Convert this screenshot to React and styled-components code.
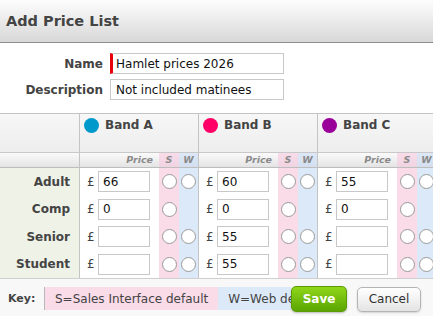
import styled, { createGlobalStyle } from 'styled-components'

const GlobalStyle = createGlobalStyle`
  html, body {
    margin: 0;
    padding: 0;
    background: #fff;
    overflow: hidden;
  }
  body {
    font-family: 'DejaVu Sans', Verdana, sans-serif;
    color: #333;
  }
`

const bands = [
  { name: 'Band A', color: '#0099cc', prices: ['66', '0', '', ''] },
  { name: 'Band B', color: '#ff0066', prices: ['60', '0', '55', '55'] },
  { name: 'Band C', color: '#990099', prices: ['55', '0', '', ''] },
]

const tickets = [
  { name: 'Adult', web: true },
  { name: 'Comp', web: false },
  { name: 'Senior', web: true },
  { name: 'Student', web: true },
]

const App = () => {
  return (
    <Dialog>
      <GlobalStyle />
      <TitleBar>Add Price List</TitleBar>

      <Form>
        <Label>Name</Label>
        <TextInput required defaultValue='Hamlet prices 2026' />
        <Label>Description</Label>
        <TextInput defaultValue='Not included matinees' />
      </Form>

      <Grid>
        <Corner />
        {bands.map((b) => (
          <BandHead key={b.name}>
            <Dot color={b.color} />
            {b.name}
          </BandHead>
        ))}

        <SubCorner />
        {bands.map((b) => (
          <SubHead key={b.name}>
            <PriceHead>Price</PriceHead>
            <Flag kind='s'>S</Flag>
            <Flag kind='w'>W</Flag>
          </SubHead>
        ))}

        {tickets.map((t, i) => (
          <Row key={t.name}>
            <RowLabel>{t.name}</RowLabel>
            {bands.map((b) => (
              <Cell key={b.name}>
                <Pound>£</Pound>
                <PriceInput defaultValue={b.prices[i]} />
                <Gap />
                <Flag kind='s'>
                  <Radio />
                </Flag>
                <Flag kind='w'>{t.web && <Radio />}</Flag>
              </Cell>
            ))}
          </Row>
        ))}
      </Grid>

      <Footer>
        <KeyArea>
          <KeyLabel>Key:</KeyLabel>
          <KeyBox kind='s'>S=Sales Interface default</KeyBox>
          <KeyBox kind='w'>W=Web default</KeyBox>
        </KeyArea>
        <SaveButton>Save</SaveButton>
        <CancelButton>Cancel</CancelButton>
      </Footer>
    </Dialog>
  )
}

const Dialog = styled.div`
  width: 433px;
  height: 316px;
  overflow: hidden;
  display: flex;
  flex-direction: column;
`

const TitleBar = styled.div`
  height: 42px;
  display: flex;
  align-items: center;
  padding-left: 6px;
  font-size: 14.5px;
  font-weight: bold;
  color: #444;
  background: linear-gradient(#fdfdfd, #d8d8d8);
  border-bottom: 1px solid #8c8c8c;
`

const Form = styled.div`
  display: grid;
  grid-template-columns: 103px 174px;
  grid-auto-rows: 21px;
  column-gap: 7px;
  row-gap: 5px;
  padding: 10px 0 13px;
`

const Label = styled.div`
  display: flex;
  align-items: center;
  justify-content: flex-end;
  font-size: 12px;
  font-weight: bold;
  color: #444;
`

const TextInput = styled.input`
  box-sizing: border-box;
  height: 21px;
  margin: 0;
  padding: 0 5px;
  font-family: inherit;
  font-size: 12px;
  color: #111;
  border: 1px solid #c8c8c8;
  border-left: ${(p) => (p.required ? '3px solid #e8000b' : '1px solid #c8c8c8')};
  padding-left: ${(p) => (p.required ? '3px' : '5px')};
  outline: none;
`

const Grid = styled.div`
  display: grid;
  grid-template-columns: 80px repeat(3, 119px);
  grid-template-rows: 39px 15px;
  border-top: 1px solid #c4c4c4;
  border-bottom: 1px solid #cfcfcf;
  width: 437px;
`

const Corner = styled.div`
  background: linear-gradient(#f7f7f7, #ededed);
  border-right: 1px solid #c4c4c4;
  border-bottom: 1px solid #c8c8c8;
`

const BandHead = styled.div`
  display: flex;
  align-items: flex-start;
  gap: 6px;
  padding: 4px 0 0 4px;
  font-size: 12px;
  font-weight: bold;
  color: #444;
  line-height: 15px;
  background: linear-gradient(#f7f7f7, #ededed);
  border-right: 1px solid #c4c4c4;
  border-bottom: 1px solid #c8c8c8;
`

const Dot = styled.span`
  width: 15px;
  height: 15px;
  border-radius: 50%;
  background: ${(p) => p.color};
`

const SubCorner = styled.div`
  background: linear-gradient(#fafafa, #e4e4e4);
  border-right: 1px solid #c4c4c4;
  border-bottom: 1px solid #bdbdbd;
`

const SubHead = styled.div`
  display: flex;
  background: linear-gradient(#fafafa, #e4e4e4);
  border-right: 1px solid #c4c4c4;
  border-bottom: 1px solid #bdbdbd;
  font-size: 9.5px;
  font-weight: bold;
  font-style: italic;
  color: #8a8a8a;
  line-height: 14px;
`

const PriceHead = styled.div`
  width: 79px;
  text-align: right;
  padding-right: 6px;
  box-sizing: border-box;
`

const Flag = styled.div`
  width: ${(p) => (p.kind === 's' ? '20px' : '19px')};
  display: flex;
  align-items: center;
  justify-content: center;
  background: ${(p) => (p.kind === 's' ? '#fadbe8' : '#dce9f8')};
  ${SubHead} & {
    background: ${(p) => (p.kind === 's' ? 'rgba(248, 200, 222, 0.6)' : 'rgba(200, 220, 245, 0.6)')};
  }
`

const Row = styled.div`
  display: contents;
`

const RowLabel = styled.div`
  height: 27.5px;
  display: flex;
  align-items: center;
  justify-content: flex-end;
  padding-right: 9px;
  font-size: 12px;
  font-weight: bold;
  color: #444;
  background: #eff2e7;
  border-right: 1px solid #c4c4c4;
`

const Cell = styled.div`
  height: 27.5px;
  display: flex;
  align-items: stretch;
  border-right: 1px solid #c4c4c4;
`

const Pound = styled.span`
  width: 18px;
  box-sizing: border-box;
  padding-left: 7px;
  display: flex;
  align-items: center;
  font-size: 12px;
  color: #444;
`

const PriceInput = styled.input`
  box-sizing: border-box;
  width: 52px;
  height: 21px;
  align-self: center;
  margin: 0;
  padding: 0 4px;
  font-family: inherit;
  font-size: 12px;
  color: #111;
  border: 1px solid #c8c8c8;
  outline: none;
`

const Gap = styled.span`
  width: 9px;
`

const Radio = styled.span`
  width: 15px;
  height: 15px;
  box-sizing: border-box;
  border-radius: 50%;
  border: 1px solid #9a9a9a;
  background: #fff;
`

const Footer = styled.div`
  flex: 1;
  display: flex;
  align-items: center;
  padding: 2px 12px 0 8px;
  background: #f8f8f8;
`

const KeyArea = styled.div`
  flex: 1;
  min-width: 0;
  overflow: hidden;
  display: flex;
  align-items: center;
  white-space: nowrap;
`

const KeyLabel = styled.span`
  width: 36px;
  flex-shrink: 0;
  font-size: 11px;
  font-weight: bold;
  color: #444;
`

const KeyBox = styled.span`
  flex-shrink: 0;
  height: 23px;
  display: flex;
  align-items: center;
  padding: 0 10px;
  font-size: 12px;
  color: #444;
  background: ${(p) => (p.kind === 's' ? '#fadbe8' : '#dce9f8')};
  border-left: ${(p) => (p.kind === 's' ? '1px solid #b8b8b8' : 'none')};
`

const SaveButton = styled.button`
  width: 56px;
  height: 26px;
  margin: 0 10px 0 0;
  padding: 0;
  font-family: inherit;
  font-size: 12px;
  font-weight: bold;
  color: #fff;
  border: 1px solid #5c9a06;
  border-radius: 5px;
  background: linear-gradient(#8fd61a, #5aa502);
  box-shadow: 0 1px 2px rgba(0, 0, 0, 0.25);
`

const CancelButton = styled.button`
  width: 64px;
  height: 25px;
  margin: 1px 0 0;
  padding: 0;
  font-family: inherit;
  font-size: 12px;
  color: #333;
  border: 1px solid #b4b4b4;
  border-radius: 5px;
  background: linear-gradient(#ffffff, #e4e4e4);
  box-shadow: 0 1px 2px rgba(0, 0, 0, 0.15);
`

export default App
